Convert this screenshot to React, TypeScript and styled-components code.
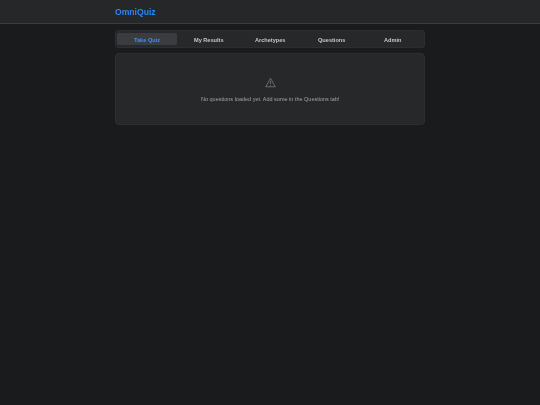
import * as React from "react"
import styled, { createGlobalStyle } from "styled-components"

const GlobalStyle = createGlobalStyle`
    html, body {
        margin: 0;
        padding: 0;
        height: 100%;
        background-color: #1a1b1d;
    }

    body {
        font-family: "Liberation Sans", Arial, sans-serif;
    }
`

const Page = styled.div`
    min-height: 405px;
    background-color: #1a1b1d;
`

const Header = styled.header`
    height: 23px;
    background-color: #252729;
    border-bottom: 1px solid #3a3c3f;
    display: flex;
    justify-content: center;
`

const HeaderInner = styled.div`
    width: 310px;
    display: flex;
    align-items: center;
`

const Logo = styled.div`
    font-size: 8.6px;
    font-weight: bold;
    color: #3085ea;
    will-change: transform;
`

const Main = styled.main`
    width: 310px;
    margin: 0 auto;
    padding-top: 6px;
    display: flex;
    flex-direction: column;
    gap: 5px;
`

const Nav = styled.nav`
    height: 18px;
    box-sizing: border-box;
    padding: 2px 1px;
    display: flex;
    gap: 1.5px;
    background-color: #26282a;
    border: 1px solid #2c2e31;
    border-radius: 3px;
`

const Tab = styled.div<{ $active?: boolean }>`
    flex: 1;
    display: flex;
    align-items: center;
    justify-content: center;
    border-radius: 2px;
    background-color: ${(props) => (props.$active ? "#3a3c3f" : "transparent")};
`

const TabLabel = styled.span<{ $active?: boolean }>`
    font-size: 5.6px;
    font-weight: bold;
    padding-top: 1px;
    will-change: transform;
    color: ${(props) => (props.$active ? "#3a8ef5" : "#c4c6c9")};
`

const Card = styled.section`
    height: 72px;
    box-sizing: border-box;
    padding-top: 23px;
    display: flex;
    flex-direction: column;
    align-items: center;
    background-color: #26282a;
    border: 1px solid #2c2e31;
    border-radius: 4px;
`

const WarningIcon = styled.svg`
    width: 11px;
    height: 11px;
    display: block;
`

const Message = styled.p`
    margin: 8px 0 0;
    font-size: 5.5px;
    color: #a0a2a5;
    will-change: transform;
`

const tabs = ["Take Quiz", "My Results", "Archetypes", "Questions", "Admin"]

export default function App(): JSX.Element {
    return (
        <Page>
            <GlobalStyle />
            <Header>
                <HeaderInner>
                    <Logo>OmniQuiz</Logo>
                </HeaderInner>
            </Header>
            <Main>
                <Nav>
                    {tabs.map((tab, index) => (
                        <Tab key={tab} $active={index === 0}>
                            <TabLabel $active={index === 0}>{tab}</TabLabel>
                        </Tab>
                    ))}
                </Nav>
                <Card>
                    <WarningIcon viewBox="0 0 22 22" fill="none" stroke="#808285" strokeWidth="1.5">
                        <path d="M11 2.5 L20.5 19.5 H1.5 Z" />
                        <path d="M11 8 V14 M11 15.5 V17.5" />
                    </WarningIcon>
                    <Message>No questions loaded yet. Add some in the Questions tab!</Message>
                </Card>
            </Main>
        </Page>
    )
}
